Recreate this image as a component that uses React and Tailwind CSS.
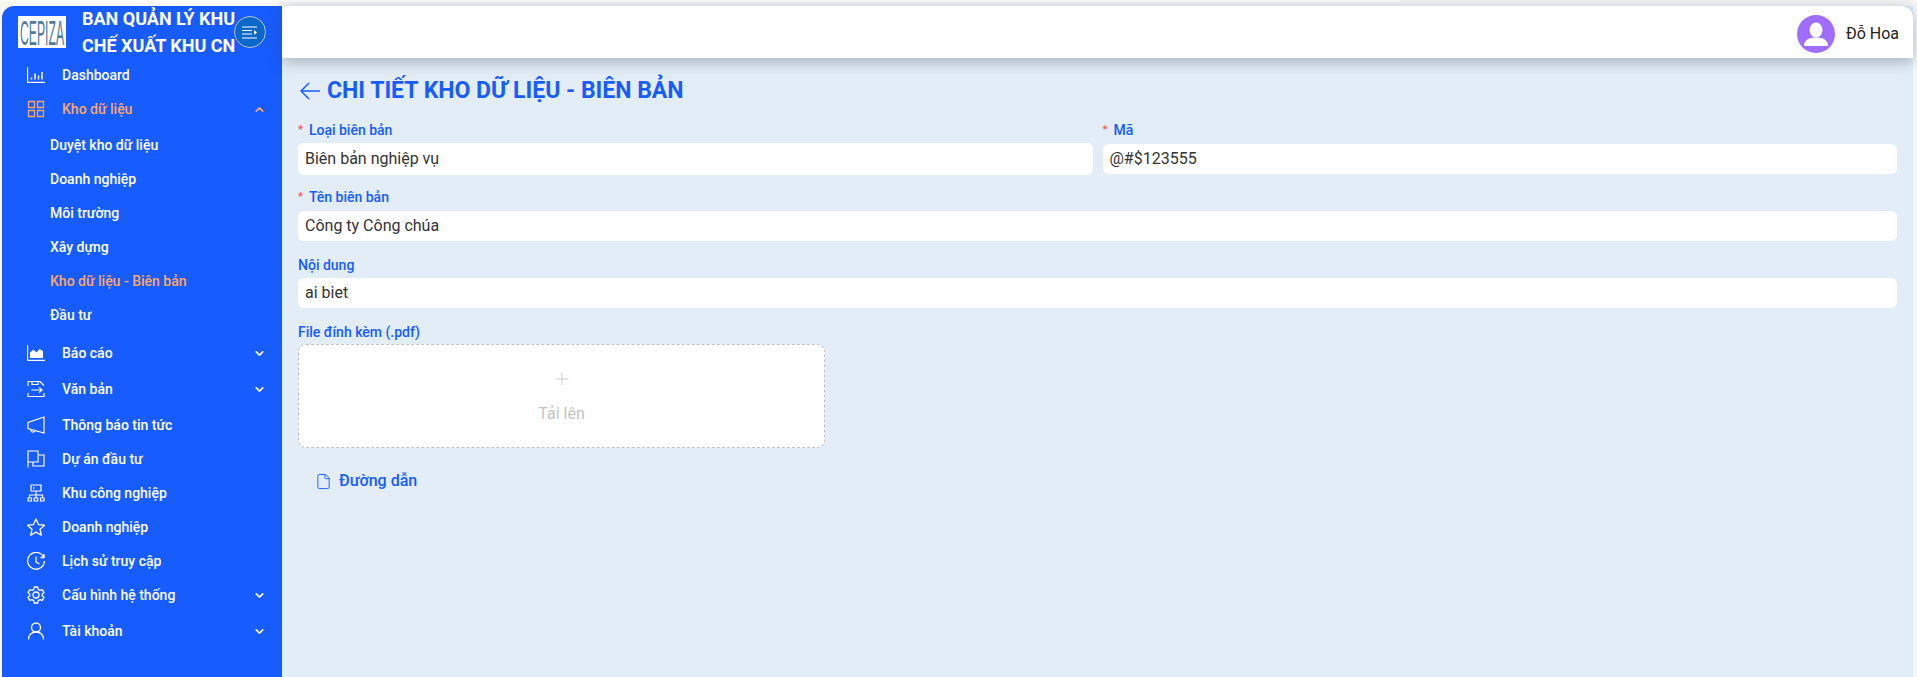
import React from "react";
import { ChevronDown, ChevronUp, File, Plus } from "lucide-react";

// Sidebar icons, drawn on an 18x18 box
const Svg = ({ children, className = "text-white" }) => (
  <svg viewBox="0 0 18 18" width="18" height="18" fill="none" stroke="currentColor" strokeWidth="1.2" className={`shrink-0 ${className}`}>
    {children}
  </svg>
);

const BarsIcon = () => (
  <Svg>
    <path d="M.6 1v15.400H18" />
    <path d="M4.500 13.500v-2M8 13.500V7.500M11.500 13.500V9.500M15 13.500V6" strokeWidth="1.500" />
  </Svg>
);
const GridIcon = () => (
  <Svg className="text-[#fda765]">
    <path d="M1.500 1.500h6v6h-6zM10.500 1.500h6v6h-6zM1.500 10.500h6v6h-6zM10.500 10.500h6v6h-6z" strokeWidth="1.300" />
  </Svg>
);
const AreaIcon = () => (
  <Svg>
    <path d="M.6 1v15.400H18" />
    <path d="M3 14V8.500l3.500-3 3 3 3-3.500L16 7v7z" fill="currentColor" stroke="none" />
  </Svg>
);
const DocIcon = () => (
  <Svg>
    <path d="M1 6V1.500h12l3.500 3.500v1M5 1.500v3h6v-3M1 13v3.500h16V13" />
    <path d="M4 10h11M12 7.500 15 10l-3 2.500" />
  </Svg>
);
const MegaIcon = () => (
  <Svg>
    <path d="M17 1v16L1 12.500v-6zM4 13.500a2 2 0 0 0 4 1" />
  </Svg>
);
const FlagIcon = () => (
  <Svg>
    <path d="M1 17.500V1h10v11H1M11 5h6v11H6v-4" />
  </Svg>
);
const TreeIcon = () => (
  <Svg>
    <path d="M4 1h10v6H4zM6 4h2M9 7v4M2.500 14v-3h13v3M9 11v3" />
    <path d="M1 14h3.500v3H1zM7.200 14h3.500v3H7.200zM13.500 14H17v3h-3.500z" />
  </Svg>
);
const StarIcon = () => (
  <Svg>
    <path d="m9 1 2.500 5.600 6 .6-4.500 4 1.300 6L9 14.100l-5.300 3.100 1.300-6-4.500-4 6-.6z" strokeWidth="1.300" strokeLinejoin="round" />
  </Svg>
);
const ClockIcon = () => (
  <Svg>
    <path d="M16.500 5A8.400 8.400 0 1 0 17.400 9M17 2v3.500h-3.500M9 4.500V10l3.500 2" strokeWidth="1.300" />
  </Svg>
);
const GearIcon = () => (
  <Svg>
    <circle cx="9" cy="9" r="3" strokeWidth="1.300" />
    <path d="m7.300 1 3.400 0 .5 2.400 1.800 1 2.300-.8 1.700 3-1.800 1.600v1.600l1.800 1.600-1.700 3-2.300-.8-1.800 1-.5 2.400H7.300l-.5-2.400-1.800-1-2.300.8-1.700-3 1.800-1.600V8.200L1 6.600l1.700-3 2.300.8 1.800-1z" strokeWidth="1.300" strokeLinejoin="round" />
  </Svg>
);
const UserIcon = () => (
  <Svg>
    <circle cx="9" cy="5.500" r="4.500" strokeWidth="1.400" />
    <path d="M1.500 17.500c0-4.500 3-7.500 7.500-7.500s7.500 3 7.500 7.500" strokeWidth="1.400" />
  </Svg>
);

const topMenu = [
  { label: "Báo cáo", icon: <AreaIcon />, arrow: true },
  { label: "Văn bản", icon: <DocIcon />, arrow: true },
  { label: "Thông báo tin tức", icon: <MegaIcon /> },
  { label: "Dự án đầu tư", icon: <FlagIcon /> },
  { label: "Khu công nghiệp", icon: <TreeIcon /> },
  { label: "Doanh nghiệp", icon: <StarIcon /> },
  { label: "Lịch sử truy cập", icon: <ClockIcon /> },
  { label: "Cấu hình hệ thống", icon: <GearIcon />, arrow: true },
  { label: "Tài khoản", icon: <UserIcon />, arrow: true },
];

const subMenu = ["Duyệt kho dữ liệu", "Doanh nghiệp", "Môi trường", "Xây dựng", "Kho dữ liệu - Biên bản", "Đầu tư"];

function MenuItem({ label, icon, arrow }) {
  return (
    <div className={`flex h-[34px] items-center pl-[25px] pr-[16px] text-white ${arrow ? "mb-[2px]" : ""}`}>
      {icon}
      <span className="ml-[17px] flex-1">{label}</span>
      {arrow && <ChevronDown size={13} strokeWidth={3} />}
    </div>
  );
}

function Sidebar() {
  return (
    <aside className="w-[280px] shrink-0 rounded-tl-xl bg-[#175cff] text-[14px] font-medium">
      <div className="relative flex h-[52px] items-center pl-[16px]">
        <svg viewBox="0 0 48 32" width="48" height="32" className="shrink-0 overflow-visible bg-white">
          <text transform="scale(1 2.900)" x="2" y="10" fontFamily="Liberation Sans, sans-serif" fontSize="12.200" fill="#4f7a9c">
            CEPIZA
          </text>
        </svg>
        <div className="ml-[16px] whitespace-nowrap text-[18px] font-bold leading-[27px] text-white">
          <div>BAN QUẢN LÝ KHU</div>
          <div>CHẾ XUẤT KHU CN</div>
        </div>
        <button className="absolute left-[232px] top-[10px] flex h-[32px] w-[32px] items-center justify-center rounded-full border border-[#b9c4d6] bg-[#0a68c8]">
          <svg viewBox="0 0 16 13" width="16" height="13" fill="none" stroke="white" strokeWidth="1.200">
            <path d="M0 1h15M0 4.500h10M0 8h10M0 12h15" />
            <path d="M12 4l3 2.500-3 2.500z" fill="white" stroke="none" />
          </svg>
        </button>
      </div>

      <MenuItem label="Dashboard" icon={<BarsIcon />} />

      <div className="mb-[4px]">
        <div className="mb-[2px] flex h-[34px] items-center pl-[25px] pr-[16px] text-[#fda765]">
          <GridIcon />
          <span className="ml-[17px] flex-1">Kho dữ liệu</span>
          <ChevronUp size={13} strokeWidth={3} />
        </div>
        {subMenu.map((item, i) => (
          <div key={item} className={`flex h-[34px] items-center pl-[48px] ${i === 4 ? "text-[#fda765]" : "text-white"}`}>
            {item}
          </div>
        ))}
      </div>

      {topMenu.map((item) => (
        <MenuItem key={item.label} {...item} />
      ))}
    </aside>
  );
}

function Header() {
  return (
    <header className="relative z-10 flex h-[52px] shrink-0 items-center justify-end rounded-tr-xl bg-white pr-[14px] shadow-[0_3px_16px_rgba(60,70,90,0.4)]">
      <svg viewBox="0 0 38 38" width="38" height="38" className="mt-[4px]">
        <circle cx="19" cy="19" r="19" fill="#a06eff" />
        <ellipse cx="19" cy="15" rx="6.500" ry="7.500" fill="white" />
        <path d="M7 31c0-6 5-8.500 12-8.500S31 25 31 31z" fill="white" />
      </svg>
      <span className="ml-[11px] mt-[3px] text-[16px] text-[#222]">Đỗ Hoa</span>
    </header>
  );
}

function Label({ children, required }) {
  return (
    <div className="flex h-[20px] items-center text-[14px] font-medium text-[#175cff]">
      {required && <span className="mr-[6px] text-[11px] text-[#ff4d4f]">*</span>}
      {children}
    </div>
  );
}

function Field({ value, className = "h-[30px]" }) {
  return (
    <div className={`flex items-center rounded-md bg-white px-[7px] text-[16px] text-[#333] ${className}`}>{value}</div>
  );
}

export default function App() {
  return (
    <div className="flex h-[677px] flex-col overflow-hidden bg-[#f7f7f7] font-['Roboto',sans-serif]">
      <div className="h-[6px] shrink-0">
        <div className="h-[2px] w-[1400px] bg-white" />
      </div>
      <div className="flex min-h-0 flex-1 pl-[2px] pr-[4px]">
        <Sidebar />
        <main className="flex min-w-0 flex-1 flex-col bg-[#e3edf8]">
          <Header />
          <div className="px-[16px] pt-[17px]">
            <div className="mb-[13px] flex h-[32px] items-center text-[#175cff]">
              <svg viewBox="0 0 20 18" width="20" height="18" fill="none" stroke="currentColor" strokeWidth="1.500" className="ml-[2px]">
                <path d="M20 9H1.500M9 1 1 9l8 8" />
              </svg>
              <h1 className="ml-[7px] text-[23px] font-bold">CHI TIẾT KHO DỮ LIỆU - BIÊN BẢN</h1>
            </div>

            <div className="mb-[12px] grid grid-cols-2 gap-x-[10px]">
              <div>
                <div className="mb-[3px]"><Label required>Loại biên bản</Label></div>
                <Field value="Biên bản nghiệp vụ" className="h-[32px]" />
              </div>
              <div>
                <div className="mb-[4px]"><Label required>Mã</Label></div>
                <Field value="@#$123555" />
              </div>
            </div>

            <div className="mb-[14px]">
              <div className="mb-[4px]"><Label required>Tên biên bản</Label></div>
              <Field value="Công ty Công chúa" />
            </div>

            <div className="mb-[14px]">
              <div className="mb-[3px]"><Label>Nội dung</Label></div>
              <Field value="ai biet" />
            </div>

            <div className="mb-[2px]"><Label>File đính kèm (.pdf)</Label></div>
            <div className="flex h-[104px] w-[527px] flex-col items-center rounded-lg border border-dashed border-[#bfbfbf] bg-white pt-[24px] text-[#c4c4c4]">
              <Plus size={20} strokeWidth={1} />
              <span className="mt-[13px] text-[16px]">Tải lên</span>
            </div>

            <div className="mt-[23px] flex h-[20px] items-center pl-[17px] text-[16px] font-medium text-[#175cff]">
              <File size={17} strokeWidth={1.300} />
              <span className="ml-[7px]">Đường dẫn</span>
            </div>
          </div>
        </main>
      </div>
    </div>
  );
}
